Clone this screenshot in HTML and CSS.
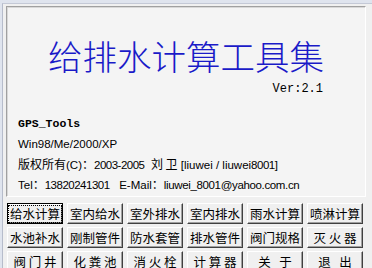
FILE: index.html
```html
<!DOCTYPE html>
<html lang="zh-CN">
<head>
<meta charset="utf-8">
<title>给排水计算工具集</title>
<link rel="stylesheet" href="styles.css">
</head>
<body>
<div class="window">
  <div class="dialog">
    <div class="panel">
      <h1 class="title">给排水计算工具集</h1>
      <div class="ver">Ver:2.1</div>
      <div class="info">
        <div class="line app">GPS_Tools</div>
        <div class="line">Win98/Me/2000/XP</div>
        <div class="line"><span class="zh">版权所有</span>(C)<span class="zh">：</span><span class="num">2003-2005</span>&nbsp; <span class="zh">刘 卫</span> [liuwei / liuwei<span class="num">8001</span>]</div>
        <div class="line">Tel<span class="zh">：</span><span class="num">13820241301</span>&nbsp;&nbsp; E-Mail<span class="zh">：</span><span class="tight">liuwei_8001@yahoo.com.cn</span></div>
      </div>
    </div>
    <div class="buttons">
      <button class="btn focus"><span>给水计算</span></button>
      <button class="btn"><span>室内给水</span></button>
      <button class="btn"><span>室外排水</span></button>
      <button class="btn"><span>室内排水</span></button>
      <button class="btn"><span>雨水计算</span></button>
      <button class="btn"><span>喷淋计算</span></button>
      <button class="btn"><span>水池补水</span></button>
      <button class="btn"><span>刚制管件</span></button>
      <button class="btn"><span>防水套管</span></button>
      <button class="btn"><span>排水管件</span></button>
      <button class="btn"><span>阀门规格</span></button>
      <button class="btn"><span>灭 火 器</span></button>
      <button class="btn"><span>阀 门 井</span></button>
      <button class="btn"><span>化 粪 池</span></button>
      <button class="btn"><span>消 火 栓</span></button>
      <button class="btn"><span>计 算 器</span></button>
      <button class="btn"><span>关&nbsp;&nbsp; 于</span></button>
      <button class="btn"><span>退&nbsp;&nbsp; 出</span></button>
    </div>
  </div>
</div>
</body>
</html>
```

FILE: styles.css
```css
html, body {
  margin: 0;
  padding: 0;
  width: 372px;
  height: 268px;
  overflow: hidden;
  background: #dfe4ee;
}

.window {
  padding: 3px 0 0 2px;
  height: 265px;
}

.dialog {
  background: #f0f0f0;
  border-left: 1px solid #b6bccb;
  border-top: 1px solid #c4c9d6;
  height: 100%;
  padding: 2px 0 0 3px;
  box-sizing: border-box;
}

.panel {
  width: 360px;
  height: 191px;
  box-sizing: border-box;
  border: 1px solid #a0a0a0;
  border-right-color: #fff;
  border-bottom-color: #fff;
  box-shadow: inset 1px 1px 0 #d8d8d8;
  background: #f4f4f4;
  display: flex;
  flex-direction: column;
}

.title {
  margin: 26px 0 0 0;
  font-family: "Noto Sans CJK SC", sans-serif;
  font-weight: 300;
  font-size: 34.5px;
  line-height: 44px;
  color: #1a1ac8;
  text-align: center;
}

.ver {
  margin-top: 5px;
  align-self: flex-end;
  margin-right: 42px;
  font-family: "Liberation Mono", monospace;
  font-size: 12px;
  line-height: 14px;
  color: #000;
}

.info {
  margin-top: 18px;
  padding-left: 11px;
  font-family: "Liberation Sans", "Noto Sans CJK SC", sans-serif;
  font-size: 11.5px;
  color: #000;
}

.line {
  height: 20px;
  line-height: 20px;
  white-space: nowrap;
}

.line.app {
  font-family: "Liberation Mono", monospace;
  font-weight: bold;
  font-size: 11.5px;
}

.zh {
  font-family: "Noto Sans CJK SC", sans-serif;
  font-size: 12px;
}

.num {
  letter-spacing: -0.5px;
}

.tight {
  letter-spacing: -0.35px;
}

.buttons {
  margin-top: 6px;
  margin-left: 1px;
  display: grid;
  grid-template-columns: repeat(6, 56px);
  grid-auto-rows: 21px;
  column-gap: 4px;
  row-gap: 3px;
}

.btn {
  margin: 0;
  padding: 0;
  background: #f0f0f0;
  border: 1px solid;
  border-color: #ffffff #404040 #404040 #ffffff;
  box-shadow: inset -1px -1px 0 #a0a0a0;
  font-family: "Noto Sans CJK SC", sans-serif;
  font-size: 12.5px;
  line-height: 16px;
  color: #000;
  display: flex;
  align-items: center;
  justify-content: center;
  white-space: pre;
}

.btn.focus {
  border: 1px solid #000;
  box-shadow: inset 1px 1px 0 #fff, inset -1px -1px 0 #808080;
}

.btn.focus span {
  outline: 1px dotted #000;
  outline-offset: 0;
  padding: 0 1px;
}
```
